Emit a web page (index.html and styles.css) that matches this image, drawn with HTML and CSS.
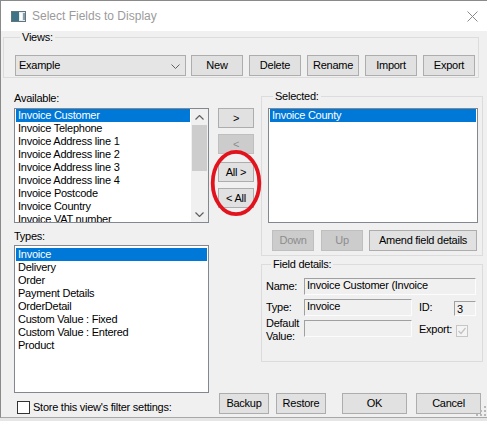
FILE: index.html
```html
<!DOCTYPE html>
<html>
<head>
<meta charset="utf-8">
<link rel="stylesheet" href="styles.css">
</head>
<body>
<div class="window">
  <div class="titlebar">
    <svg class="app-icon" width="15" height="11" viewBox="0 0 15 11">
      <rect x="0.5" y="0.5" width="14" height="10" fill="#e8eef0" stroke="#5f7580"/>
      <rect x="1" y="1" width="7" height="9" fill="#3f7386"/>
      <rect x="9" y="2" width="2" height="7" fill="#ffffff"/>
      <rect x="12" y="2" width="2" height="7" fill="#8aa0a8"/>
    </svg>
    <span class="title">Select Fields to Display</span>
    <svg class="close" width="11" height="11" viewBox="0 0 11 11">
      <path d="M0.5 0.5 L10.5 10.5 M10.5 0.5 L0.5 10.5" stroke="#8a8a8a" stroke-width="1" fill="none"/>
    </svg>
  </div>

  <div class="client">
    <fieldset class="group views">
      <legend>Views:</legend>
      <div class="views-row">
        <div class="combo">
          <span>Example</span>
          <svg class="chev" width="9" height="5" viewBox="0 0 9 5"><path d="M0.5 0.5 L4.5 4.5 L8.5 0.5" stroke="#606060" fill="none"/></svg>
        </div>
        <button class="btn vbtn">New</button>
        <button class="btn vbtn">Delete</button>
        <button class="btn vbtn">Rename</button>
        <button class="btn vbtn">Import</button>
        <button class="btn vbtn">Export</button>
      </div>
    </fieldset>

    <div class="main">
      <div class="col-left">
        <div class="label">Available:</div>
        <div class="listbox avail">
          <ul class="items">
            <li class="sel">Invoice Customer</li>
            <li>Invoice Telephone</li>
            <li>Invoice Address line 1</li>
            <li>Invoice Address line 2</li>
            <li>Invoice Address line 3</li>
            <li>Invoice Address line 4</li>
            <li>Invoice Postcode</li>
            <li>Invoice Country</li>
            <li>Invoice VAT number</li>
          </ul>
          <div class="vscroll">
            <svg class="sarrow" width="9" height="5" viewBox="0 0 9 5"><path d="M0.5 4.5 L4.5 0.5 L8.5 4.5" stroke="#606060" stroke-width="1.2" fill="none"/></svg>
            <div class="thumb"></div>
            <div class="track"></div>
            <svg class="sarrow" width="9" height="5" viewBox="0 0 9 5"><path d="M0.5 0.5 L4.5 4.5 L8.5 0.5" stroke="#606060" stroke-width="1.2" fill="none"/></svg>
          </div>
        </div>
        <div class="label types-label">Types:</div>
        <div class="listbox types">
          <ul class="items">
            <li class="sel">Invoice</li>
            <li>Delivery</li>
            <li>Order</li>
            <li>Payment Details</li>
            <li>OrderDetail</li>
            <li>Custom Value : Fixed</li>
            <li>Custom Value : Entered</li>
            <li>Product</li>
          </ul>
        </div>
      </div>

      <div class="col-mid">
        <button class="btn abtn a1">&gt;</button>
        <button class="btn abtn a2 disabled">&lt;</button>
        <button class="btn abtn a3">All &gt;</button>
        <button class="btn abtn a4">&lt; All</button>
        <svg class="circle" width="52" height="68" viewBox="0 0 52 68">
          <ellipse cx="26" cy="34" rx="23.3" ry="31.2" fill="none" stroke="#e3131e" stroke-width="3.8"/>
        </svg>
      </div>

      <div class="col-right">
        <fieldset class="group selected">
          <legend>Selected:</legend>
          <div class="listbox sel-list">
            <ul class="items">
              <li class="sel">Invoice County</li>
            </ul>
          </div>
          <div class="sel-buttons">
            <button class="btn disabled b-down">Down</button>
            <button class="btn disabled b-up">Up</button>
            <button class="btn b-amend">Amend field details</button>
          </div>
        </fieldset>

        <fieldset class="group details">
          <legend>Field details:</legend>
          <div class="details-grid">
            <div class="flabel">Name:</div>
            <div class="field name-field">Invoice Customer (Invoice<br>Customer)</div>
            <div class="flabel">Type:</div>
            <div class="field type-field">Invoice</div>
            <div></div>
            <div class="flabel">ID:</div>
            <div class="field id-field">3</div>
            <div class="flabel two">Default<br>Value:</div>
            <div class="field default-field"></div>
            <div></div>
            <div class="flabel export-label">Export:</div>
            <div class="chk-disabled">
              <svg width="12" height="12" viewBox="0 0 12 12">
                <rect x="0.5" y="0.5" width="11" height="11" fill="#f4f4f4" stroke="#c6c6c6"/>
                <path d="M2.5 6 L5 8.5 L9.5 3" stroke="#c2c2c2" stroke-width="1.2" fill="none"/>
              </svg>
            </div>
          </div>
        </fieldset>
      </div>
    </div>

    <div class="footer">
      <div class="store">
        <span class="checkbox"></span>
        <span>Store this view's filter settings:</span>
      </div>
      <button class="btn f-backup">Backup</button>
      <button class="btn f-restore">Restore</button>
      <button class="btn f-ok">OK</button>
      <button class="btn f-cancel">Cancel</button>
    </div>
  </div>

  <svg class="grip" width="10" height="10" viewBox="0 0 10 10">
    <rect x="8" y="0" width="2" height="2" fill="#b8b8b8"/>
    <rect x="4" y="4" width="2" height="2" fill="#b8b8b8"/>
    <rect x="8" y="4" width="2" height="2" fill="#b8b8b8"/>
    <rect x="0" y="8" width="2" height="2" fill="#b8b8b8"/>
    <rect x="4" y="8" width="2" height="2" fill="#b8b8b8"/>
    <rect x="8" y="8" width="2" height="2" fill="#b8b8b8"/>
  </svg>
</div>
</body>
</html>
```

FILE: styles.css
```css
* { box-sizing: border-box; }

html, body {
  margin: 0;
  padding: 0;
}

body {
  width: 487px;
  height: 421px;
  overflow: hidden;
  background: #e6e6e6;
  font-family: "Liberation Sans", Arial, sans-serif;
  font-size: 11px;
  line-height: 13px;
  letter-spacing: -0.25px;
  color: #000;
}

.window {
  position: relative;
  height: 418px;
  background: #f0f0f0;
  border-top: 1px solid #8a8a8a;
  border-left: 1px solid #8a8a8a;
  border-bottom: 1px solid #a8a8a8;
}

/* title bar */
.titlebar {
  height: 30px;
  background: #fff;
  display: flex;
  align-items: center;
  padding-left: 10px;
}
.app-icon { margin-top: 1px; }
.title {
  margin-left: 6px;
  font-size: 12px;
  letter-spacing: 0;
  color: #9b9b9b;
  flex: 1;
}
.close { margin-right: 9px; margin-top: 1px; }

/* group boxes */
.group {
  margin: 0;
  padding: 0;
  border: 1px solid #dcdcdc;
  min-inline-size: 0;
}
.group legend {
  padding: 0 2px;
  margin-left: 5px;
  line-height: 13px;
}

.views {
  margin-left: 2px;
  width: 476px;
  padding: 11px 0 1px 11px;
}
.views-row {
  display: flex;
  gap: 6px;
}
.combo {
  width: 171px;
  height: 21px;
  margin-right: -1px;
  background: #e5e5e5;
  border: 1px solid #adadad;
  display: flex;
  align-items: center;
  justify-content: space-between;
  padding: 0 5px 0 3px;
}
.chev { margin-top: 1px; }

.btn {
  font: inherit;
  letter-spacing: inherit;
  color: #000;
  background: #e1e1e1;
  border: 1px solid #adadad;
  padding: 0;
  margin: 0;
  display: flex;
  align-items: center;
  justify-content: center;
}
.btn.disabled {
  background: #cccccc;
  border-color: #bfbfbf;
  color: #8d8d8d;
}
.vbtn { width: 52px; height: 21px; }

/* main */
.main {
  display: flex;
  align-items: flex-start;
}
.col-left {
  margin-left: 13px;
  width: 195px;
  padding-top: 14px;
}
.label { height: 13px; }
.listbox {
  background: #fff;
  border: 1px solid #828790;
  overflow: hidden;
}
.items {
  list-style: none;
  margin: 0;
  padding: 0;
}
.items li {
  height: 13px;
  margin: 0 1px;
  padding-left: 2px;
  white-space: nowrap;
}
.items li.sel {
  background: #0078d7;
  color: #fff;
}
.avail {
  margin-top: 3px;
  height: 115px;
  display: flex;
}
.avail .items { flex: 1; }
.vscroll {
  width: 17px;
  background: #f0f0f0;
  display: flex;
  flex-direction: column;
  align-items: center;
}
.sarrow { margin: 6px 0 5px; flex: none; }
.thumb {
  width: 15px;
  height: 46px;
  background: #cdcdcd;
}
.track { flex: 1; }
.types-label { margin-top: 7px; }
.types {
  margin-top: 2px;
  height: 148px;
  padding-top: 2px;
}

.col-mid {
  position: relative;
  margin-left: 9px;
  width: 36px;
  padding-top: 30px;
  display: flex;
  flex-direction: column;
}
.abtn { width: 36px; height: 20px; }
.a2 { margin-top: 6px; }
.a3 { margin-top: 8px; }
.a4 { margin-top: 6px; }
.circle {
  position: absolute;
  left: -8px;
  top: 71px;
}

.col-right {
  margin-left: 7px;
  width: 222px;
  padding-top: 12px;
}
.selected {
  padding: 5px 0 4px 6px;
}
.sel-list {
  width: 210px;
  height: 115px;
}
.sel-buttons {
  display: flex;
  margin-top: 7px;
  margin-left: 4px;
}
.sel-buttons .btn { height: 21px; }
.b-down { width: 42px; }
.b-up { width: 42px; margin-left: 7px; }
.b-amend { width: 108px; margin-left: 6px; }

.details {
  margin-top: 2px;
  padding: 7px 0 12px 4px;
}
.details-grid {
  display: grid;
  grid-template-columns: 38px 108px 7px 35px 22px;
  grid-template-rows: 17px 17px 29px;
  row-gap: 4px;
}
.flabel { align-self: center; }
.field {
  background: #f0f0f0;
  border-top: 1px solid #a0a0a0;
  border-left: 1px solid #a0a0a0;
  border-right: 1px solid #fcfcfc;
  border-bottom: 1px solid #fcfcfc;
  padding: 0 2px;
  overflow: hidden;
  white-space: nowrap;
}
.name-field { grid-column: 2 / -1; }
.type-field { grid-column: 2; }
.id-field { height: 15px; align-self: end; padding-top: 1px; }
.flabel.two { align-self: start; margin-top: -3px; }
.default-field { height: 17px; }
.export-label { align-self: start; margin-top: 3px; }
.chk-disabled { align-self: start; margin-top: 5px; margin-left: 2px; line-height: 0; }

/* footer */
.footer {
  display: flex;
  align-items: flex-start;
}
.store {
  margin-left: 16px;
  width: 202px;
  display: flex;
  align-items: center;
  margin-top: 8px;
}
.checkbox {
  width: 13px;
  height: 13px;
  border: 1px solid #333;
  background: #fff;
  margin-right: 3px;
}
.footer .btn { height: 21px; }
.f-backup { width: 50px; }
.f-restore { width: 50px; margin-left: 7px; }
.f-ok { width: 65px; margin-left: 16px; }
.f-cancel { width: 65px; margin-left: 9px; }

.grip {
  position: absolute;
  right: 1px;
  bottom: 1px;
}
```
